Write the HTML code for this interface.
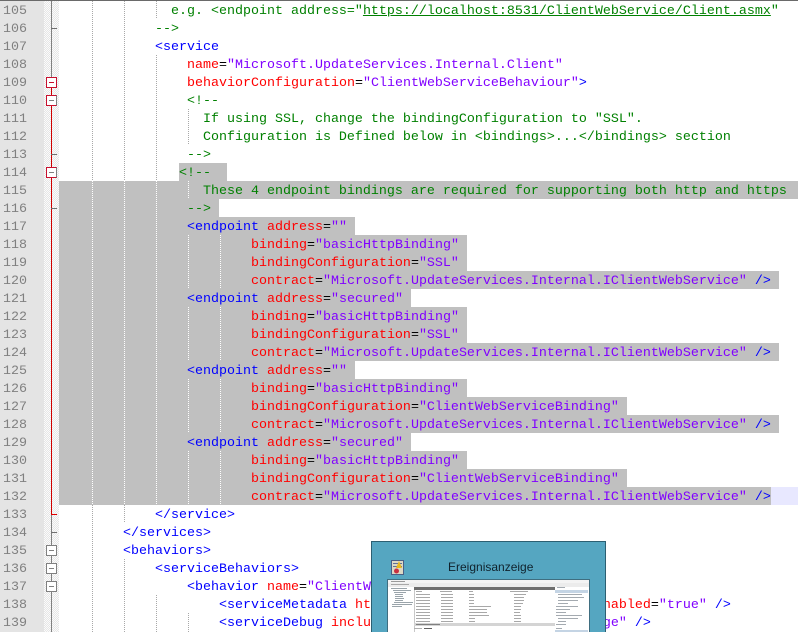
<!DOCTYPE html>
<html><head><meta charset="utf-8">
<style>
html,body{margin:0;padding:0;background:#fff}
#p{position:relative;width:798px;height:632px;overflow:hidden;background:#fff;font-family:"Liberation Mono",monospace;font-size:13.33px}
#p div{position:absolute}
.n{left:3px;width:30px;height:18px;line-height:18px;color:#808080;white-space:pre;margin-top:2px}
.t{left:59px;height:18px;line-height:18px;white-space:pre;color:#000;margin-top:2px}
.s{background:#c0c0c0;height:18px}
.g{width:1px;background:repeating-linear-gradient(#a8a8a8 0 1px,transparent 1px 2px)}
.w{width:1px;background:repeating-linear-gradient(#fff 0 1px,transparent 1px 2px)}
.b{color:#0000ff}.r{color:#ff0000}.v{color:#8000ff}.c{color:#008000}.u{text-decoration:underline}
.x{left:46px;width:9px;height:9px;background:#fff;border:1px solid #808080}
.x i{position:absolute;left:2px;top:4px;width:5px;height:1px;background:#808080}
.xr{border-color:#c8102e}.xr i{background:#c8102e}
.xm{border-color:#c8102e #808080 #c8102e #c8102e}
.k{left:51px;width:6px;height:1px;background:#707070}
.kr{background:#e00000}
</style></head><body><div id="p">
<div style="left:0;top:0;width:44px;height:632px;background:#e4e4e4"></div>
<div style="left:44px;top:0;width:15px;height:632px;background:repeating-conic-gradient(#e6e6e6 0 25%,#fbfbfb 0 50%) 0 0/2px 2px"></div>
<div style="left:0;top:0;width:798px;height:1px;background:#6a6a6a"></div>

<!-- current line + selection -->
<div style="left:771px;top:487px;width:27px;height:18px;background:#e8e8ff"></div>
<div class="s" style="left:179px;top:163px;width:48px"></div>
<div class="s" style="left:59px;top:181px;width:739px"></div>
<div class="s" style="left:59px;top:199px;width:160px"></div>
<div class="s" style="left:59px;top:217px;width:296px"></div>
<div class="s" style="left:59px;top:235px;width:408px"></div>
<div class="s" style="left:59px;top:253px;width:408px"></div>
<div class="s" style="left:59px;top:271px;width:720px"></div>
<div class="s" style="left:59px;top:289px;width:352px"></div>
<div class="s" style="left:59px;top:307px;width:408px"></div>
<div class="s" style="left:59px;top:325px;width:408px"></div>
<div class="s" style="left:59px;top:343px;width:720px"></div>
<div class="s" style="left:59px;top:361px;width:296px"></div>
<div class="s" style="left:59px;top:379px;width:408px"></div>
<div class="s" style="left:59px;top:397px;width:568px"></div>
<div class="s" style="left:59px;top:415px;width:720px"></div>
<div class="s" style="left:59px;top:433px;width:352px"></div>
<div class="s" style="left:59px;top:451px;width:408px"></div>
<div class="s" style="left:59px;top:469px;width:568px"></div>
<div class="s" style="left:59px;top:487px;width:712px"></div>

<!-- indent guides -->
<div class="g" style="left:92px;top:1px;height:180px"></div>
<div class="w" style="left:92px;top:181px;height:324px"></div>
<div class="g" style="left:92px;top:505px;height:127px"></div>
<div class="g" style="left:124px;top:1px;height:180px"></div>
<div class="w" style="left:124px;top:181px;height:324px"></div>
<div class="g" style="left:124px;top:505px;height:18px"></div>
<div class="g" style="left:124px;top:559px;height:73px"></div>
<div class="g" style="left:156px;top:1px;height:18px"></div>
<div class="g" style="left:156px;top:55px;height:126px"></div>
<div class="w" style="left:156px;top:181px;height:324px"></div>
<div class="g" style="left:156px;top:595px;height:37px"></div>
<div class="g" style="left:188px;top:109px;height:36px"></div>
<div class="w" style="left:188px;top:181px;height:18px"></div>
<div class="w" style="left:188px;top:235px;height:54px"></div>
<div class="w" style="left:188px;top:307px;height:54px"></div>
<div class="w" style="left:188px;top:379px;height:54px"></div>
<div class="w" style="left:188px;top:451px;height:54px"></div>
<div class="g" style="left:188px;top:613px;height:19px"></div>
<div class="w" style="left:220px;top:235px;height:54px"></div>
<div class="w" style="left:220px;top:307px;height:54px"></div>
<div class="w" style="left:220px;top:379px;height:54px"></div>
<div class="w" style="left:220px;top:451px;height:54px"></div>

<!-- fold margin -->
<div style="left:51px;top:1px;width:1px;height:76px;background:#808080"></div>
<div style="left:51px;top:87px;width:1px;height:427px;background:#d00000"></div>
<div style="left:51px;top:515px;width:1px;height:117px;background:#808080"></div>
<div class="k" style="top:28px"></div>
<div class="k" style="top:154px"></div>
<div class="k" style="top:208px"></div>
<div class="k kr" style="top:514px"></div>
<div class="k" style="top:532px"></div>
<div class="x xr" style="top:77px"><i></i></div>
<div class="x xm" style="top:95px"><i></i></div>
<div class="x xm" style="top:167px"><i></i></div>
<div class="x" style="top:545px"><i></i></div>
<div class="x" style="top:563px"><i></i></div>
<div class="x" style="top:581px"><i></i></div>

<!-- line numbers -->
<div class="n" style="top:1px">105</div>
<div class="n" style="top:19px">106</div>
<div class="n" style="top:37px">107</div>
<div class="n" style="top:55px">108</div>
<div class="n" style="top:73px">109</div>
<div class="n" style="top:91px">110</div>
<div class="n" style="top:109px">111</div>
<div class="n" style="top:127px">112</div>
<div class="n" style="top:145px">113</div>
<div class="n" style="top:163px">114</div>
<div class="n" style="top:181px">115</div>
<div class="n" style="top:199px">116</div>
<div class="n" style="top:217px">117</div>
<div class="n" style="top:235px">118</div>
<div class="n" style="top:253px">119</div>
<div class="n" style="top:271px">120</div>
<div class="n" style="top:289px">121</div>
<div class="n" style="top:307px">122</div>
<div class="n" style="top:325px">123</div>
<div class="n" style="top:343px">124</div>
<div class="n" style="top:361px">125</div>
<div class="n" style="top:379px">126</div>
<div class="n" style="top:397px">127</div>
<div class="n" style="top:415px">128</div>
<div class="n" style="top:433px">129</div>
<div class="n" style="top:451px">130</div>
<div class="n" style="top:469px">131</div>
<div class="n" style="top:487px">132</div>
<div class="n" style="top:505px">133</div>
<div class="n" style="top:523px">134</div>
<div class="n" style="top:541px">135</div>
<div class="n" style="top:559px">136</div>
<div class="n" style="top:577px">137</div>
<div class="n" style="top:595px">138</div>
<div class="n" style="top:613px">139</div>

<!-- code -->
<div class="t c" style="top:1px">              e.g. &lt;endpoint address="<span class="u">https://localhost:8531/ClientWebService/Client.asmx</span>"</div>
<div class="t c" style="top:19px">            --&gt;</div>
<div class="t b" style="top:37px">            &lt;service</div>
<div class="t" style="top:55px">                <span class="r">name</span>=<span class="v">"Microsoft.UpdateServices.Internal.Client"</span></div>
<div class="t" style="top:73px">                <span class="r">behaviorConfiguration</span>=<span class="v">"ClientWebServiceBehaviour"</span><span class="b">&gt;</span></div>
<div class="t c" style="top:91px">                &lt;!--</div>
<div class="t c" style="top:109px">                  If using SSL, change the bindingConfiguration to "SSL".</div>
<div class="t c" style="top:127px">                  Configuration is Defined below in &lt;bindings&gt;...&lt;/bindings&gt; section</div>
<div class="t c" style="top:145px">                --&gt;</div>
<div class="t c" style="top:163px">               &lt;!--</div>
<div class="t c" style="top:181px">                  These 4 endpoint bindings are required for supporting both http and https</div>
<div class="t c" style="top:199px">                --&gt;</div>
<div class="t" style="top:217px">                <span class="b">&lt;endpoint</span> <span class="r">address</span>=<span class="v">""</span></div>
<div class="t" style="top:235px">                        <span class="r">binding</span>=<span class="v">"basicHttpBinding"</span></div>
<div class="t" style="top:253px">                        <span class="r">bindingConfiguration</span>=<span class="v">"SSL"</span></div>
<div class="t" style="top:271px">                        <span class="r">contract</span>=<span class="v">"Microsoft.UpdateServices.Internal.IClientWebService"</span> <span class="b">/&gt;</span></div>
<div class="t" style="top:289px">                <span class="b">&lt;endpoint</span> <span class="r">address</span>=<span class="v">"secured"</span></div>
<div class="t" style="top:307px">                        <span class="r">binding</span>=<span class="v">"basicHttpBinding"</span></div>
<div class="t" style="top:325px">                        <span class="r">bindingConfiguration</span>=<span class="v">"SSL"</span></div>
<div class="t" style="top:343px">                        <span class="r">contract</span>=<span class="v">"Microsoft.UpdateServices.Internal.IClientWebService"</span> <span class="b">/&gt;</span></div>
<div class="t" style="top:361px">                <span class="b">&lt;endpoint</span> <span class="r">address</span>=<span class="v">""</span></div>
<div class="t" style="top:379px">                        <span class="r">binding</span>=<span class="v">"basicHttpBinding"</span></div>
<div class="t" style="top:397px">                        <span class="r">bindingConfiguration</span>=<span class="v">"ClientWebServiceBinding"</span></div>
<div class="t" style="top:415px">                        <span class="r">contract</span>=<span class="v">"Microsoft.UpdateServices.Internal.IClientWebService"</span> <span class="b">/&gt;</span></div>
<div class="t" style="top:433px">                <span class="b">&lt;endpoint</span> <span class="r">address</span>=<span class="v">"secured"</span></div>
<div class="t" style="top:451px">                        <span class="r">binding</span>=<span class="v">"basicHttpBinding"</span></div>
<div class="t" style="top:469px">                        <span class="r">bindingConfiguration</span>=<span class="v">"ClientWebServiceBinding"</span></div>
<div class="t" style="top:487px">                        <span class="r">contract</span>=<span class="v">"Microsoft.UpdateServices.Internal.IClientWebService"</span> <span class="b">/&gt;</span></div>
<div class="t b" style="top:505px">            &lt;/service&gt;</div>
<div class="t b" style="top:523px">        &lt;/services&gt;</div>
<div class="t b" style="top:541px">        &lt;behaviors&gt;</div>
<div class="t b" style="top:559px">            &lt;serviceBehaviors&gt;</div>
<div class="t" style="top:577px">                <span class="b">&lt;behavior</span> <span class="r">name</span>=<span class="v">"ClientW</span></div>
<div class="t" style="top:595px">                    <span class="b">&lt;serviceMetadata</span> <span class="r">ht</span>                             <span class="r">nabled</span>=<span class="v">"true"</span> <span class="b">/&gt;</span></div>
<div class="t" style="top:613px">                    <span class="b">&lt;serviceDebug</span> <span class="r">inclu</span>                             <span class="v">ge"</span> <span class="b">/&gt;</span></div>

<!-- taskbar preview popup -->
<div style="left:371px;top:541px;width:233px;height:95px;background:#55a6c1;border:1px solid #2c5f72"></div>
<div style="left:448px;top:559px;height:16px;line-height:16px;font-family:'Liberation Sans',sans-serif;font-size:12px;color:#10222c;white-space:pre">Ereignisanzeige</div>
<svg style="position:absolute;left:0;top:0;filter:blur(.35px)" width="798" height="632">
  <!-- event viewer icon -->
  <rect x="391.5" y="560.5" width="12" height="14" fill="#dcd8c4" stroke="#4a5f86"/>
  <rect x="393" y="563" width="9" height="1" fill="#5f7098"/>
  <rect x="393" y="566" width="9" height="1" fill="#5f7098"/>
  <polygon points="399,561 402,568 396,568" fill="#e8b820"/>
  <circle cx="396.5" cy="571" r="2.5" fill="#c83040"/>
  <!-- thumbnail -->
  <rect x="387.5" y="579.5" width="202" height="60" fill="#fff" stroke="#3f6e80"/>
  <rect x="388" y="580" width="201" height="3" fill="#f4f4f4"/>
  <rect x="391" y="581" width="14" height="1" fill="#9a9a9a"/>
  <rect x="388" y="583" width="201" height="4" fill="#ececec"/>
  <rect x="391" y="584" width="18" height="1" fill="#a8a8a8"/>
  <!-- tree -->
  <g fill="#9aa4aa">
    <rect x="391" y="588" width="16" height="1"/><rect x="393" y="590" width="18" height="1"/>
    <rect x="394" y="592" width="12" height="1"/><rect x="395" y="594" width="8" height="1"/>
    <rect x="395" y="596" width="8" height="1"/><rect x="395" y="598" width="9" height="1"/>
    <rect x="395" y="600" width="8" height="1"/><rect x="394" y="602" width="19" height="1"/>
    <rect x="392" y="604" width="20" height="1"/><rect x="392" y="606" width="10" height="1"/>
  </g>
  <!-- list -->
  <rect x="414" y="587" width="1" height="53" fill="#c8c8c8"/>
  <rect x="414" y="587" width="141" height="3" fill="#6e6e6e"/>
  <g fill="#a8a8a8">
    <rect x="416" y="591" width="6" height="1"/><rect x="440" y="591" width="12" height="1"/><rect x="469" y="591" width="4" height="1"/><rect x="510" y="591" width="18" height="1"/>
    <rect x="416" y="594" width="14" height="1"/><rect x="441" y="594" width="12" height="1"/><rect x="469" y="594" width="5" height="1"/><rect x="514" y="594" width="12" height="1"/>
    <rect x="416" y="597" width="14" height="1"/><rect x="441" y="597" width="12" height="1"/><rect x="469" y="597" width="5" height="1"/><rect x="514" y="597" width="10" height="1"/>
    <rect x="416" y="600" width="14" height="1"/><rect x="441" y="600" width="12" height="1"/><rect x="469" y="600" width="5" height="1"/><rect x="514" y="600" width="10" height="1"/>
    <rect x="416" y="603" width="14" height="1"/><rect x="441" y="603" width="12" height="1"/><rect x="469" y="603" width="5" height="1"/><rect x="514" y="603" width="9" height="1"/>
    <rect x="416" y="606" width="14" height="1"/><rect x="441" y="606" width="12" height="1"/><rect x="469" y="606" width="22" height="1"/><rect x="514" y="606" width="7" height="1"/>
    <rect x="416" y="609" width="14" height="1"/><rect x="441" y="609" width="12" height="1"/><rect x="469" y="609" width="18" height="1"/><rect x="514" y="609" width="7" height="1"/>
    <rect x="416" y="612" width="14" height="1"/><rect x="441" y="612" width="12" height="1"/><rect x="469" y="612" width="18" height="1"/><rect x="514" y="612" width="6" height="1"/>
    <rect x="416" y="615" width="14" height="1"/><rect x="441" y="615" width="12" height="1"/><rect x="469" y="615" width="20" height="1"/><rect x="514" y="615" width="7" height="1"/>
    <rect x="416" y="618" width="14" height="1"/><rect x="441" y="618" width="12" height="1"/><rect x="469" y="618" width="6" height="1"/><rect x="514" y="618" width="7" height="1"/>
    <rect x="416" y="621" width="14" height="1"/><rect x="441" y="621" width="12" height="1"/><rect x="469" y="621" width="6" height="1"/><rect x="514" y="621" width="7" height="1"/>
  </g>
  <rect x="414" y="623" width="141" height="3" fill="#d4d4d4"/>
  <rect x="416" y="624" width="24" height="1" fill="#808080"/>
  <rect x="414" y="628" width="8" height="1" fill="#b0b0b0"/>
  <rect x="424" y="628" width="8" height="1" fill="#606060"/>
  <!-- actions panel -->
  <rect x="555" y="587" width="33" height="53" fill="#fff"/>
  <rect x="555" y="590" width="33" height="3" fill="#c4d4e4"/>
  <g fill="#a4aab0">
    <rect x="557" y="587" width="8" height="1"/><rect x="558" y="594" width="24" height="1"/>
    <rect x="558" y="597" width="26" height="1"/><rect x="558" y="600" width="20" height="1"/>
    <rect x="558" y="603" width="10" height="1"/><rect x="556" y="606" width="22" height="1"/>
    <rect x="556" y="609" width="14" height="1"/><rect x="556" y="612" width="10" height="1"/>
    <rect x="556" y="615" width="26" height="1"/><rect x="558" y="618" width="20" height="1"/>
    <rect x="558" y="621" width="8" height="1"/><rect x="556" y="624" width="10" height="1"/>
    <rect x="556" y="628" width="6" height="1"/>
  </g>
  <rect x="555" y="630" width="33" height="2" fill="#c4d4e4"/>
</svg>
</div></body></html>
